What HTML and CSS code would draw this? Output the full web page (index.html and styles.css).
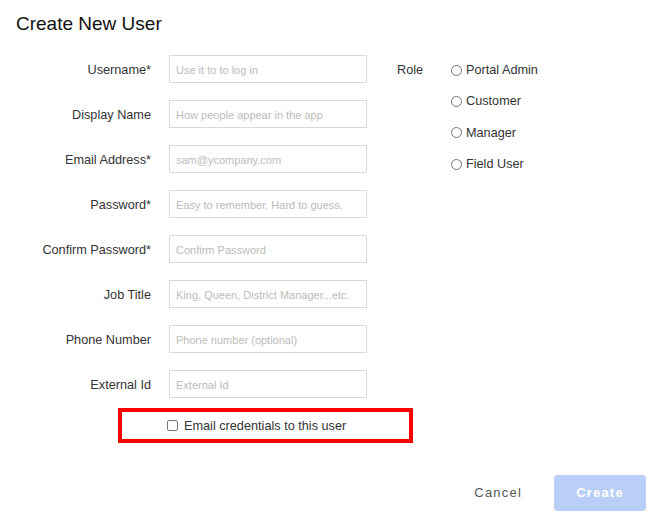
FILE: index.html
```html
<!DOCTYPE html>
<html lang="en">
<head>
  <meta charset="UTF-8">
  <meta name="viewport" content="width=device-width, initial-scale=1.0">
  <title>Create New User</title>
  <link rel="stylesheet" href="styles.css">
</head>
<body>
  <div class="modal">
    <h1 class="title">Create New User</h1>
    <form class="user-form">
      <div class="fields">
        <label for="username">Username*</label>
        <input id="username" type="text" placeholder="Use it to to log in">
        <label for="displayName">Display Name</label>
        <input id="displayName" type="text" placeholder="How people appear in the app">
        <label for="email">Email Address*</label>
        <input id="email" type="text" placeholder="sam@ycompany.com">
        <label for="password">Password*</label>
        <input id="password" type="password" placeholder="Easy to remember. Hard to guess.">
        <label for="confirm">Confirm Password*</label>
        <input id="confirm" type="password" placeholder="Confirm Password">
        <label for="jobTitle">Job Title</label>
        <input id="jobTitle" type="text" placeholder="King, Queen, District Manager...etc.">
        <label for="phone">Phone Number</label>
        <input id="phone" type="text" placeholder="Phone number (optional)">
        <label for="externalId">External Id</label>
        <input id="externalId" type="text" placeholder="External Id">
      </div>
      <div class="role">
        <div class="role-label">Role</div>
        <div class="role-list">
          <label class="radio"><input type="radio" name="role">Portal Admin</label>
          <label class="radio"><input type="radio" name="role">Customer</label>
          <label class="radio"><input type="radio" name="role">Manager</label>
          <label class="radio"><input type="radio" name="role">Field User</label>
        </div>
      </div>
    </form>
    <div class="send-box">
      <label class="check"><input type="checkbox">Email credentials to this user</label>
    </div>
    <div class="actions">
      <button class="btn-cancel" type="button">Cancel</button>
      <button class="btn-create" type="button" disabled>Create</button>
    </div>
  </div>
</body>
</html>
```

FILE: styles.css
```css
:root{--text:#333;--muted:#bbb;--border:#d9d9d9;--primary-light:#b9cff8;--font-base:"Liberation Sans",Arial,Helvetica,sans-serif}
body{margin:0;padding:0;font-family:var(--font-base);color:var(--text);background:#fff}
.modal{padding:0 16px}
.title{margin:13px 0 20px;font-size:19px;line-height:22px;font-weight:normal;color:#111}
.user-form{display:flex;align-items:flex-start}
.fields{display:grid;grid-template-columns:135px 198px;grid-auto-rows:28px;column-gap:18px;row-gap:17px;align-items:center}
.fields label{text-align:right;font-size:12.7px;padding-top:2px}
.fields input{box-sizing:border-box;height:28px;width:198px;margin:0;padding:2px 6px 0;border:1px solid var(--border);border-radius:0;font-family:var(--font-base);font-size:11px;color:var(--text);outline:none}
.fields input::placeholder{color:var(--muted)}
.role{display:flex;margin-left:30px}
.role-label{width:54px;height:28px;line-height:30px;font-size:12.7px}
.role-list{display:flex;flex-direction:column;gap:3.4px;padding-top:1px}
.radio{display:flex;align-items:center;height:28px;font-size:12.7px}
.radio input{appearance:none;box-sizing:border-box;width:11px;height:11px;margin:0 4px 0 0;border:1px solid #777;border-radius:50%;background:#fff}
.send-box{box-sizing:border-box;width:295px;height:35px;margin:10px 0 0 102px;padding-left:45px;border:4px solid #f00;display:flex;align-items:center}
.check{display:flex;align-items:center;font-size:12.7px}
.check input{appearance:none;box-sizing:border-box;width:11px;height:11px;margin:0 6px 0 0;border:1px solid #777;border-radius:2px;background:#fff}
.actions{display:flex;justify-content:flex-end;align-items:center;gap:16px;margin-top:32px}
.actions button{height:36px;padding-bottom:2px;font-family:var(--font-base);font-size:13px;letter-spacing:1.2px;border:none;border-radius:4px;cursor:pointer}
.btn-cancel{padding:0 16px;background:none;color:#555}
.btn-create{width:92px;background:var(--primary-light);color:#fff;font-weight:bold}
```
